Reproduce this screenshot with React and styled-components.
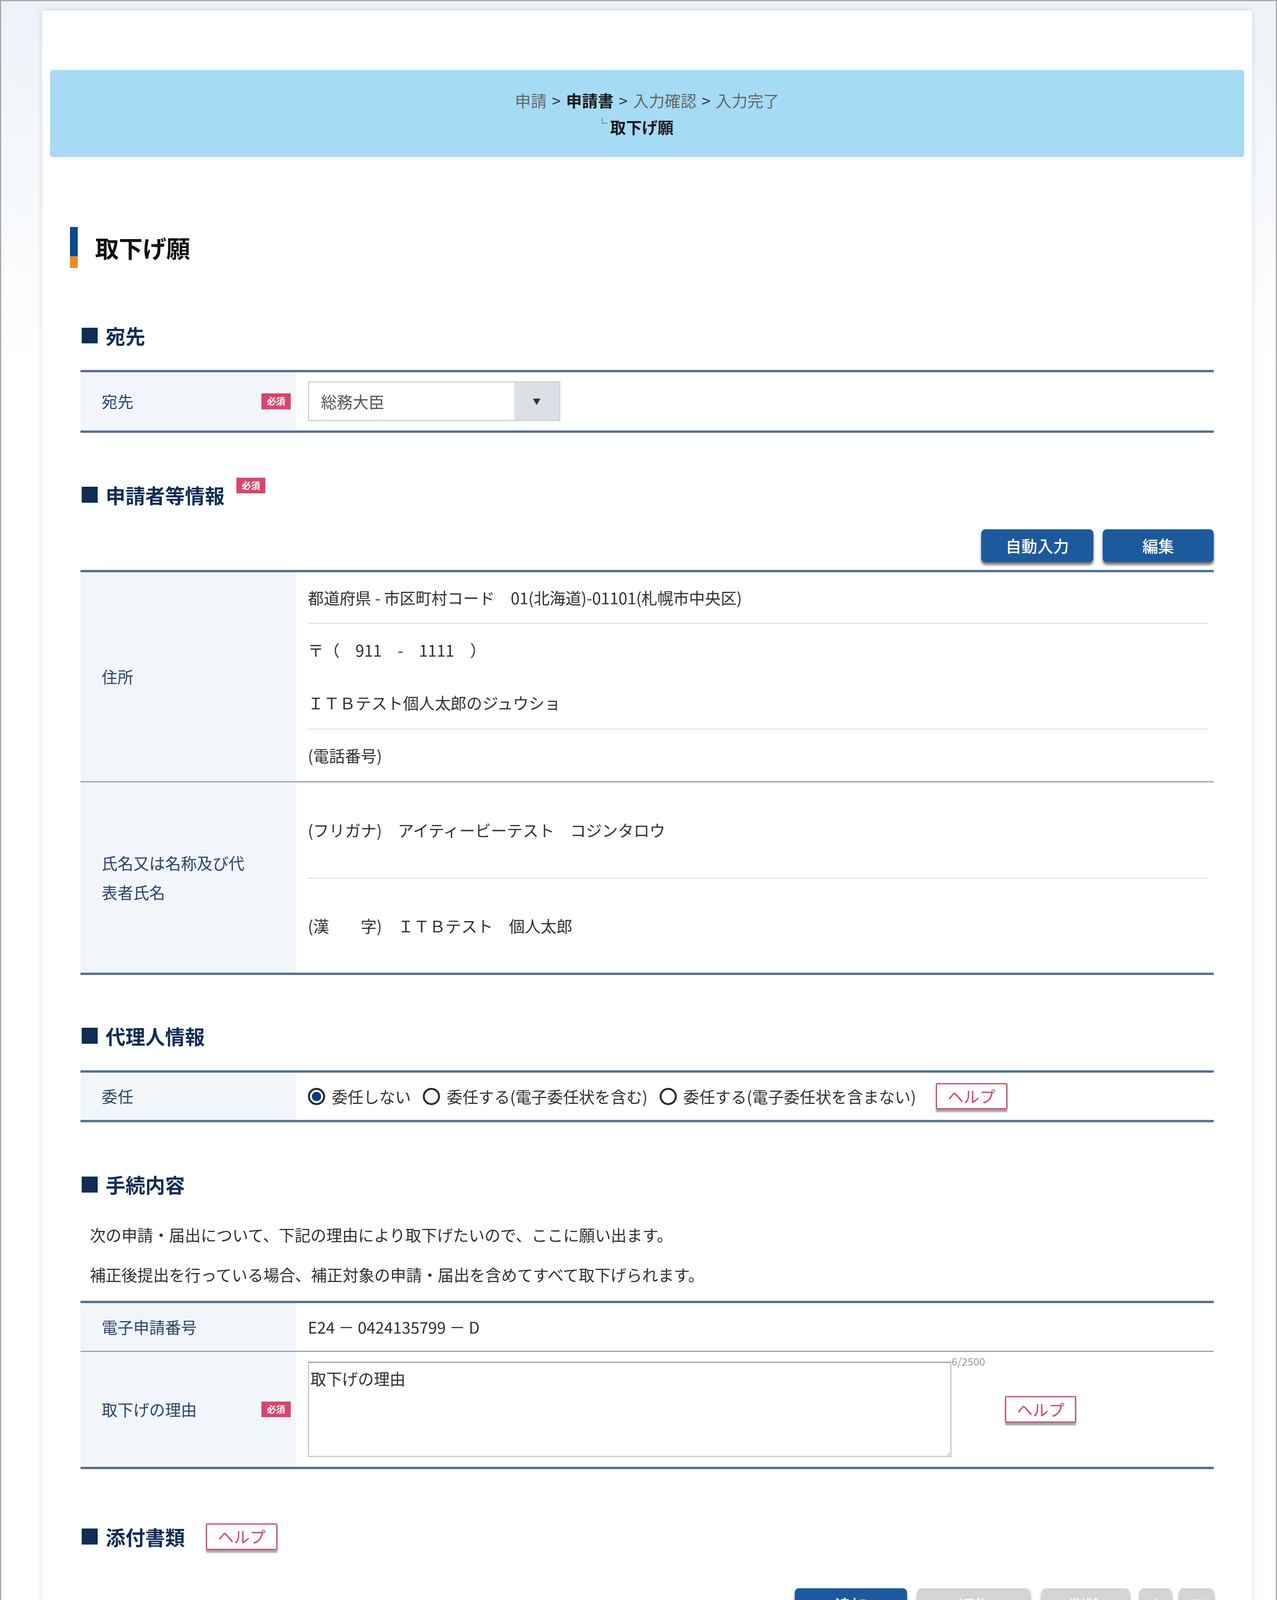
import React from 'react'
import styled, { createGlobalStyle, css } from 'styled-components'

// スクリーンショットは幅 966px の画面を拡大したもの
const SCALE = 3268 / 966
const PAGE_HEIGHT = Math.floor((5303 / SCALE) * 100) / 100

const colors = {
  navy: '#0f2d55',
  label: '#2c4668',
  labelBg: '#f2f6fa',
  rule: '#56718f',
  ruleLight: '#8ea3bb',
  divider: '#e3e3e3',
  text: '#333',
  badge: '#d8456b',
  help: '#d1456b',
  primary: '#1d5a9d',
  disabled: '#d4d4d4',
  sort: '#8b00ff',
}

const GlobalStyle = createGlobalStyle`
  html, body {
    margin: 0;
    padding: 0;
    background: #fff;
  }

  body {
    overflow: hidden;
    color: ${colors.text};
    font-family: "Noto Sans CJK JP", "Noto Sans", sans-serif;
  }

  *, *::before, *::after {
    box-sizing: border-box;
  }
`

const SortMark = () => (
  <svg width="10" height="8" viewBox="0 0 10 8">
    <polygon points="0,0 10,0 5,8" fill={colors.sort} />
  </svg>
)

const Radio = ({ checked, children }) => (
  <RadioOption>
    <RadioMark $checked={checked} />
    {children}
  </RadioOption>
)

const App = () => {
  return (
    <>
      <GlobalStyle />
      <Page>
        <Card>
          <Breadcrumb>
            <CrumbLine>
              <Crumb>申請</Crumb>
              <Sep>&gt;</Sep>
              <Crumb $current>申請書</Crumb>
              <Sep>&gt;</Sep>
              <Crumb>入力確認</Crumb>
              <Sep>&gt;</Sep>
              <Crumb>入力完了</Crumb>
            </CrumbLine>
            <CrumbLine $sub>
              <Corner>└</Corner>
              <Crumb $current>取下げ願</Crumb>
            </CrumbLine>
          </Breadcrumb>

          <Main>
            <PageTitle>取下げ願</PageTitle>

            {/* 宛先 */}
            <SectionHeading $top={41}>宛先</SectionHeading>
            <FormTable $top={16}>
              <Row>
                <Label>
                  <LabelText>宛先</LabelText>
                  <Badge>必須</Badge>
                </Label>
                <Value $h={44}>
                  <Select>
                    <SelectText>総務大臣</SelectText>
                    <SelectArrow>▼</SelectArrow>
                  </Select>
                </Value>
              </Row>
            </FormTable>

            {/* 申請者等情報 */}
            <SectionHeading $top={37}>
              申請者等情報
              <HeadingBadge>必須</HeadingBadge>
            </SectionHeading>
            <ButtonBar $top={16}>
              <Button $variant="primary" $w={85}>自動入力</Button>
              <Button $variant="primary" $w={84}>編集</Button>
            </ButtonBar>
            <FormTable $top={6}>
              <Row>
                <Label>
                  <LabelText>住所</LabelText>
                </Label>
                <Value $stack>
                  <SubRow $h={38}>都道府県 - 市区町村コード　01(北海道)-01101(札幌市中央区)</SubRow>
                  <SubRow $h={80} $lh={40}>
                    <span>〒（　911　-　1111　）</span>
                    <span>ＩＴＢテスト個人太郎のジュウショ</span>
                  </SubRow>
                  <SubRow $h={40}>(電話番号)</SubRow>
                </Value>
              </Row>
              <Row>
                <Label>
                  <LabelText>氏名又は名称及び代表者氏名</LabelText>
                </Label>
                <Value $stack>
                  <SubRow $h={72}>(フリガナ)　アイティービーテスト　コジンタロウ</SubRow>
                  <SubRow $h={72}>(漢　　字)　ＩＴＢテスト　個人太郎</SubRow>
                </Value>
              </Row>
            </FormTable>

            {/* 代理人情報 */}
            <SectionHeading $top={36}>代理人情報</SectionHeading>
            <FormTable $top={16}>
              <Row>
                <Label>
                  <LabelText>委任</LabelText>
                </Label>
                <Value $h={36}>
                  <Radio checked>委任しない</Radio>
                  <Radio>委任する(電子委任状を含む)</Radio>
                  <Radio>委任する(電子委任状を含まない)</Radio>
                  <Button $variant="help" $w={54} $left={6}>ヘルプ</Button>
                </Value>
              </Row>
            </FormTable>

            {/* 手続内容 */}
            <SectionHeading $top={37}>手続内容</SectionHeading>
            <Notice>
              <p>次の申請・届出について、下記の理由により取下げたいので、ここに願い出ます。</p>
              <p>補正後提出を行っている場合、補正対象の申請・届出を含めてすべて取下げられます。</p>
            </Notice>
            <FormTable $top={0}>
              <Row>
                <Label>
                  <LabelText>電子申請番号</LabelText>
                </Label>
                <Value $h={36}>E24 － 0424135799 － D</Value>
              </Row>
              <Row>
                <Label>
                  <LabelText>取下げの理由</LabelText>
                  <Badge>必須</Badge>
                </Label>
                <Value $h={87}>
                  <Reason readOnly value="取下げの理由" />
                  <Counter>6/2500</Counter>
                  <Button $variant="help" $w={54} $left={15}>ヘルプ</Button>
                </Value>
              </Row>
            </FormTable>

            {/* 添付書類 */}
            <SectionHeading $top={41}>
              添付書類
              <Button $variant="help" $w={54} $left={16}>ヘルプ</Button>
            </SectionHeading>
            <ButtonBar $top={29}>
              <Button $variant="primary" $w={85}>追加</Button>
              <Button $variant="disabled" $w={85} $left={1}>編集</Button>
              <Button $variant="disabled" $w={66} $left={2}>削除</Button>
              <Button $variant="disabled" $w={24} $left={1}>▲</Button>
              <Button $variant="disabled" $w={26} $left={-1}>▼</Button>
            </ButtonBar>
            <AttachTable>
              <AttachHeader>
                <HeaderCell />
                <HeaderCell>
                  <HeaderText>選択</HeaderText>
                </HeaderCell>
                <HeaderCell>
                  <HeaderText>書類種別</HeaderText>
                  <SortCell><SortMark /></SortCell>
                </HeaderCell>
                <HeaderCell>
                  <HeaderText>ファイル名</HeaderText>
                  <SortCell><SortMark /></SortCell>
                </HeaderCell>
                <HeaderCell>
                  <HeaderText>通信欄</HeaderText>
                  <SortCell><SortMark /></SortCell>
                </HeaderCell>
              </AttachHeader>
              <AttachBody />
            </AttachTable>
          </Main>

          <Footer>
            <Button $variant="back" $w={174}>マイページに戻る</Button>
            <Highlight>
              <Button $variant="complete" $w={107}>入力完了</Button>
            </Highlight>
          </Footer>
        </Card>
      </Page>
    </>
  )
}

export default App

const Page = styled.div`
  zoom: ${SCALE};
  width: 966px;
  height: ${PAGE_HEIGHT}px;
  overflow: hidden;
  padding: 7px 18px 0 31px;
  border: 1px solid #a9a9a9;
  background: linear-gradient(180deg, #edf3f9 0, #ffffff 280px);
`

const Card = styled.div`
  padding: 45px 6px 6px;

  background: #fff;
  box-shadow: 0 0 5px rgba(0, 0, 0, 0.13);
`

const Breadcrumb = styled.div`
  display: flex;
  align-items: center;
  justify-content: center;
  flex-direction: column;

  height: 66px;
  border-radius: 2px;

  background: #a5dbf5;
  color: #666;
  font-size: 12px;
  line-height: 20px;
`

const CrumbLine = styled.div`
  display: flex;
  align-items: center;

  ${p => p.$sub && css`
    margin-right: 18px;
  `}
`

const Crumb = styled.span`
  color: ${p => (p.$current ? '#1a1a1a' : '#666')};
  font-weight: ${p => (p.$current ? 700 : 400)};
`

const Sep = styled.span`
  margin: 0 4px;

  color: #333;
`

const Corner = styled.span`
  margin-right: 2px;

  color: #333;
  font-size: 8px;
  line-height: 1;
  transform: translateY(-3px);
`

const Main = styled.div`
  padding: 0 23px 31px;
`

const PageTitle = styled.h1`
  display: flex;
  align-items: center;
  gap: 13px;

  height: 31px;
  margin: 53px 0 0 -8px;

  color: #111;
  font-size: 18px;
  font-weight: 700;

  &::before {
    content: '';
    width: 6px;
    height: 31px;

    background: linear-gradient(180deg, #0d4a8f 0, #0d4a8f 71%, #f08a22 71%);
  }
`

const SectionHeading = styled.h2`
  display: flex;
  align-items: center;

  height: 20px;
  margin: ${p => p.$top}px 0 0;
  padding-left: 1px;

  color: ${colors.navy};
  font-size: 15px;
  font-weight: 700;

  &::before {
    content: '';
    width: 12px;
    height: 12px;
    margin-right: 6px;

    background: ${colors.navy};
  }
`

const Badge = styled.span`
  display: inline-flex;
  align-items: center;
  justify-content: center;
  flex-shrink: 0;

  width: 22px;
  height: 12px;

  background: ${colors.badge};
  color: #fff;
  font-size: 7px;
  font-weight: 700;
  line-height: 1;
`

const HeadingBadge = styled(Badge)`
  align-self: flex-start;

  margin: -3px 0 0 9px;
`

const FormTable = styled.div`
  margin-top: ${p => p.$top}px;
  border-top: 2px solid ${colors.rule};
  border-bottom: 2px solid ${colors.rule};
`

const Row = styled.div`
  display: grid;
  grid-template-columns: 163px 1fr;

  & + & {
    border-top: 1px solid ${colors.ruleLight};
  }
`

const Label = styled.div`
  display: flex;
  align-items: center;
  justify-content: space-between;

  padding: 4px 4px 4px 16px;

  background: ${colors.labelBg};
  color: ${colors.label};
  font-size: 12px;
  line-height: 22px;
`

const LabelText = styled.span`
  max-width: 110px;
`

const Value = styled.div`
  display: flex;
  align-items: ${p => (p.$stack ? 'stretch' : 'center')};
  flex-direction: ${p => (p.$stack ? 'column' : 'row')};

  min-height: ${p => p.$h || 0}px;
  padding: 0 4px 0 9px;

  color: ${colors.text};
  font-size: 12px;
`

const SubRow = styled.div`
  display: flex;
  justify-content: center;
  flex-direction: column;

  height: ${p => p.$h}px;

  line-height: ${p => p.$lh || 20}px;

  & + & {
    border-top: 1px solid ${colors.divider};
  }
`

const Select = styled.div`
  display: flex;

  width: 191px;
  height: 30px;
  border: 1px solid #cfd3d8;
`

const SelectText = styled.span`
  display: flex;
  align-items: center;
  flex: 1;

  padding-left: 9px;

  color: #555;
  font-size: 12px;
`

const SelectArrow = styled.span`
  display: flex;
  align-items: center;
  justify-content: center;

  width: 34px;

  background: #dcdfe4;
  color: #333;
  font-size: 6px;
`

const ButtonBar = styled.div`
  display: flex;
  justify-content: flex-end;
  gap: 7px;

  margin-top: ${p => p.$top}px;
  margin-bottom: 6px;
`

const variants = {
  primary: css`
    border: none;
    border-radius: 3px;
    background: ${colors.primary};
    box-shadow: 0 2px 2px rgba(0, 0, 0, 0.55);
    color: #fff;
    font-weight: 500;
  `,
  disabled: css`
    border: none;
    border-radius: 3px;
    background: ${colors.disabled};
    box-shadow: 0 2px 2px rgba(0, 0, 0, 0.5);
    color: #f8f8f8;
    font-weight: 500;
  `,
  help: css`
    height: 20px;
    border: 1px solid ${colors.help};
    border-radius: 1px;
    background: #fff;
    box-shadow: 0 2px 1px rgba(0, 0, 0, 0.35);
    color: ${colors.help};
    font-weight: 400;
  `,
  back: css`
    height: 27px;
    border: 2px solid #1a3b68;
    border-radius: 2px;
    background: #fff;
    box-shadow: 0 2px 2px rgba(0, 0, 0, 0.45);
    color: #333;
    font-size: 13px;
  `,
  complete: css`
    height: 28px;
    border: 1px solid #e2731c;
    border-radius: 2px;
    background: linear-gradient(180deg, #f3963e 0, #ee7d1f 100%);
    box-shadow: 0 2px 2px rgba(0, 0, 0, 0.4);
    color: #fff;
    font-size: 13px;
  `,
}

const Button = styled.button`
  display: inline-flex;
  align-items: center;
  justify-content: center;
  flex-shrink: 0;

  width: ${p => p.$w}px;
  height: 25px;
  margin-left: ${p => p.$left || 0}px;
  padding: 0;

  font-family: inherit;
  font-size: 12px;
  line-height: 1;
  cursor: pointer;

  ${p => variants[p.$variant]}
`

const RadioOption = styled.label`
  display: inline-flex;
  align-items: center;
  gap: 5px;

  margin-right: 9px;

  color: ${colors.text};
  font-size: 12px;
  white-space: nowrap;
`

const RadioMark = styled.span`
  width: 13px;
  height: 13px;
  border: 1.5px solid #2a2a2a;
  border-radius: 50%;

  ${p => p.$checked && css`
    background: #0b3c7f;
    box-shadow: inset 0 0 0 1.5px #fff;
  `}
`

const Notice = styled.div`
  margin: 13px 0 5px;
  padding-left: 7px;

  color: ${colors.text};
  font-size: 12px;
  line-height: 30px;

  p {
    margin: 0;
  }
`

const Reason = styled.textarea`
  width: 487px;
  height: 72px;
  padding: 3px 1px;
  border: 1px solid #c6c6c6;
  border-top-color: #9c9c9c;

  color: ${colors.text};
  font-family: inherit;
  font-size: 12px;
  resize: both;
`

const Counter = styled.span`
  align-self: flex-start;

  margin-top: 3px;

  color: #9a9a9a;
  font-size: 8px;
  line-height: 1;
`

const AttachTable = styled.div`
  margin-right: 4px;
  border: 1px solid #b8c6d8;
`

const AttachHeader = styled.div`
  display: grid;
  grid-template-columns: 40px 52px 153px 312px 1fr;

  height: 27px;
  border-bottom: 2px solid #c3c9d1;

  background: #f4f8fb;
`

const HeaderCell = styled.div`
  display: grid;
  grid-template-columns: 1fr auto 1fr;
  align-items: center;

  & + & {
    border-left: 1px solid #c3c9d1;
  }
`

const HeaderText = styled.span`
  grid-column: 2;

  color: #1d3050;
  font-size: 10px;
  font-weight: 700;
`

const SortCell = styled.span`
  display: flex;
  justify-content: flex-end;

  padding-right: 9px;
`

const AttachBody = styled.div`
  height: 173px;

  background: #efefef;
`

const Footer = styled.div`
  display: flex;
  align-items: center;
  justify-content: space-between;

  height: 82px;
  padding: 0 22px 0 31px;
  border-bottom: 6px solid #0d2a50;

  background: #f3f7fb;
`

const Highlight = styled.div`
  display: flex;

  padding: 4px 6px 5px;
  border: 3px solid #e8000b;
`
